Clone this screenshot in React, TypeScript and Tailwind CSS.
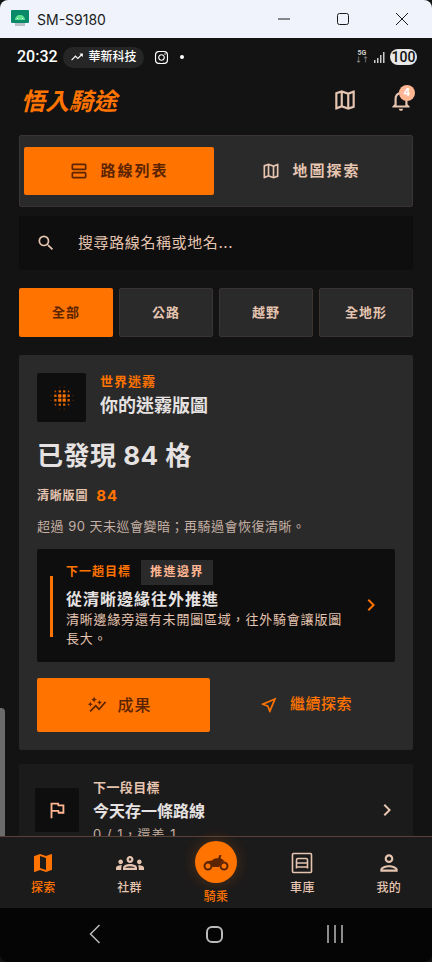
import {
  MdChevronRight,
  MdMap,
  MdOutlineAutoGraph,
  MdOutlineFlag,
  MdOutlineGroups,
  MdOutlineMap,
  MdOutlineNearMe,
  MdOutlineNotifications,
  MdOutlinePerson,
  MdOutlineSearch,
  MdOutlineTrendingUp,
  MdOutlineViewAgenda,
} from "react-icons/md";
import { FaInstagram } from "react-icons/fa";

const cjk = "font-['Inter','Noto_Sans_CJK_TC',sans-serif]";

const FogDots = () => {
  const pos = [-11, -6.6, -2.2, 2.2, 6.6, 11];
  return (
    <svg width="26" height="26" viewBox="-13 -13 26 26">
      {pos.map((x) =>
        pos.map((y) => {
          const d = Math.hypot(x, y);
          if (d > 12) return null;
          const s = d < 4 ? 3.2 : d < 8 ? 2.4 : d < 10 ? 1.6 : 1;
          const o = d < 4 ? 1 : d < 8 ? 0.85 : d < 10 ? 0.7 : 0.5;
          return <rect key={`${x}${y}`} x={x - s / 2} y={y - s / 2} width={s} height={s} rx="0.5" fill="#ff7300" opacity={o} />;
        }),
      )}
    </svg>
  );
};

const Garage = () => (
  <svg width="22" height="22" viewBox="0 0 22 22" fill="none" stroke="#e5c4b0" strokeWidth="1.6">
    <rect x="1.5" y="1.5" width="19" height="19" rx="1" />
    <path d="M5.500 16.500V8c0-1 .5-1.500 1.500-1.500h8c1 0 1.500.5 1.500 1.500v8.500" />
    <path d="M5.500 11h11M5.500 15h11" />
  </svg>
);

const Bike = () => (
  <svg width="26" height="17" viewBox="0 0 26 17" fill="none" stroke="#5c2400">
    <circle cx="5" cy="12" r="3.500" strokeWidth="2" />
    <circle cx="21" cy="12" r="3.500" strokeWidth="2" />
    <path d="M3 7.500l6-1c2-2 4-2.500 6-2l1.500-3.500h2L17.500 4l4 3-3.500 1.500-2 4.500H9.500L8 9.500z" fill="#5c2400" stroke="none" />
  </svg>
);

const NavItem = ({ icon, label, active }: { icon: React.ReactNode; label: string; active?: boolean }) => (
  <div className={`flex-1 flex flex-col items-center pt-[13px] ${active ? "text-[#ff7300]" : "text-[#e5c4b0]"}`}>
    <div className="h-[26px] flex items-center justify-center">{icon}</div>
    <span className="text-[12px] leading-[16px] mt-[4px] font-medium tracking-[0.3px]">{label}</span>
  </div>
);

const App = () => {
  return (
    <div className={`${cjk} w-[432px] h-[962px] flex flex-col bg-[#131313] overflow-hidden relative`}>
      {/* window chrome */}
      <div className="h-[38px] shrink-0 bg-[#f0f3fb] rounded-t-[8px] flex items-center pl-[11px] text-[#1b1b1b]">
        <svg width="18" height="18" viewBox="0 0 18 18">
          <rect x="0" y="0" width="18" height="13" rx="1" fill="#0b8a6a" />
          <rect x="4" y="13" width="10" height="3" fill="#b9bfc4" />
          <path d="M4 10c0-3 2-5 5-5s5 2 5 5z" fill="#5ee08f" />
          <path d="M6 8h1v1H6zM11 8h1v1h-1z" fill="#fff" />
        </svg>
        <span className="ml-[8px] text-[14px] font-['Inter',sans-serif]">SM-S9180</span>
        <div className="ml-auto flex items-center">
          <svg width="14" height="14" viewBox="0 0 14 14" className="mr-[45px]">
            <path d="M1 7h12" stroke="#1b1b1b" strokeWidth="1" />
          </svg>
          <svg width="14" height="14" viewBox="0 0 14 14" className="mr-[45px]">
            <rect x="1.500" y="1.500" width="11" height="11" rx="2" fill="none" stroke="#1b1b1b" strokeWidth="1" />
          </svg>
          <svg width="14" height="14" viewBox="0 0 14 14" className="mr-[23px]">
            <path d="M1 1l12 12M13 1L1 13" stroke="#1b1b1b" strokeWidth="1" />
          </svg>
        </div>
      </div>

      {/* status bar */}
      <div className="h-[38px] shrink-0 flex items-center pl-[17px] pr-[15px] text-white font-['Roboto','Noto_Sans_CJK_TC',sans-serif]">
        <span className="text-[16px] font-medium">20:32</span>
        <div className="ml-[5px] h-[21px] px-[7px] rounded-full bg-[#262626] flex items-center gap-[5px]">
          <MdOutlineTrendingUp size={14} />
          <span className="text-[12px] font-medium">華新科技</span>
        </div>
        <FaInstagram size={15} className="ml-[10px]" />
        <span className="ml-[11px] w-[4px] h-[4px] rounded-full bg-white" />
        <div className="ml-auto flex items-center gap-[5px]">
          <div className="flex flex-col items-center leading-[7px] text-[7px] font-bold text-[#ccc]">
            <span>5G</span>
            <span className="text-[#888]">↓↑</span>
          </div>
          <svg width="11" height="11" viewBox="0 0 11 11" fill="#ccc">
            <rect x="0" y="8" width="1.500" height="3" />
            <rect x="3" y="6" width="1.500" height="5" />
            <rect x="6" y="3" width="1.500" height="8" />
            <rect x="9" y="0" width="1.500" height="11" />
          </svg>
          <span className="w-[27px] h-[16px] rounded-full bg-[#e8e8e8] text-[#111] text-[14px] font-medium flex items-center justify-center">
            100
          </span>
        </div>
      </div>

      {/* header */}
      <div className="h-[59px] shrink-0 flex items-center pl-[21px] pr-[18px]">
        <h1 className="text-[24px] font-bold italic text-[#ff7300] leading-none -mt-[8px]">悟入騎途</h1>
        <div className="ml-auto flex items-center gap-[30px] text-[#e5c4b0] -mt-[12px]">
          <MdOutlineMap size={26} />
          <div className="relative">
            <MdOutlineNotifications size={26} />
            <span className="absolute -top-[2px] -right-[1px] w-[16px] h-[16px] rounded-full bg-[#ffb693] text-white text-[10px] font-bold flex items-center justify-center">
              4
            </span>
          </div>
        </div>
      </div>

      {/* scroll area */}
      <div className="flex-1 min-h-0 overflow-hidden px-[19px]">
        <div className="h-[72px] bg-[#2a2a2a] rounded-[2px] border border-[#3a3532] flex p-[4px] items-center">
          <div className="w-[190px] h-[48px] bg-[#ff7300] rounded-[2px] flex items-center justify-center gap-[11px] text-[#5c2400]">
            <MdOutlineViewAgenda size={20} />
            <span className="text-[15px] font-bold tracking-[2px]">路線列表</span>
          </div>
          <div className="flex-1 h-[48px] flex items-center justify-center gap-[11px] text-[#e5c4b0]">
            <MdOutlineMap size={20} />
            <span className="text-[15px] font-bold tracking-[2px]">地圖探索</span>
          </div>
        </div>

        <div className="h-[54px] mt-[9px] bg-[#0e0e0e] rounded-[2px] flex items-center pl-[17px] text-[#e5c4b0]">
          <MdOutlineSearch size={20} />
          <span className="ml-[22px] text-[15px] tracking-[0.6px]">搜尋路線名稱或地名...</span>
        </div>

        <div className="mt-[18px] grid grid-cols-4 gap-[6px]">
          <div className="h-[49px] rounded-[2px] bg-[#ff7300] text-[#5c2400] text-[13px] font-bold tracking-[1px] flex items-center justify-center">全部</div>
          {["公路", "越野", "全地形"].map((t) => (
            <div key={t} className="h-[49px] rounded-[2px] bg-[#2a2a2a] border border-[#3a3532] text-[#e5c4b0] text-[13px] font-bold tracking-[1px] flex items-center justify-center">
              {t}
            </div>
          ))}
        </div>

        {/* fog card */}
        <div className="mt-[18px] h-[395px] bg-[#2a2a2a] rounded-[2px] p-[18px]">
          <div className="flex gap-[14px]">
            <div className="w-[49px] h-[49px] rounded-[2px] bg-[#0e0e0e] flex items-center justify-center">
              <FogDots />
            </div>
            <div>
              <p className="text-[13px] leading-[16px] font-bold text-[#ff7300] tracking-[1px]">世界迷霧</p>
              <p className="text-[18px] leading-[24px] mt-[5px] font-bold text-[#e5e2e1]">你的迷霧版圖</p>
            </div>
          </div>
          <p className="mt-[15px] text-[26px] leading-[38px] font-bold text-[#e5e2e1] tracking-[0.5px]">已發現 84 格</p>
          <div className="mt-[10px] flex items-center gap-[8px]">
            <span className="text-[12px] font-bold text-[#e5c4b0] tracking-[0.8px]">清晰版圖</span>
            <span className="text-[15px] font-bold text-[#ff7300] tracking-[1px]">84</span>
          </div>
          <p className="mt-[8px] text-[13px] leading-[20px] text-[#c5b0a3] tracking-[0.5px]">超過 90 天未巡會變暗；再騎過會恢復清晰。</p>

          <div className="mt-[13px] h-[113px] bg-[#0e0e0e] rounded-[2px] flex items-center pl-[13px] pr-[16px]">
            <div className="w-[3px] h-[61px] bg-[#ff7300] self-start mt-[27px]" />
            <div className="ml-[13px] flex-1 self-start pt-[11px]">
              <div className="flex items-center gap-[10px]">
                <span className="text-[12px] font-bold text-[#ff7300] tracking-[1px]">下一趟目標</span>
                <span className="h-[25px] px-[9px] bg-[#2a2a2a] text-[12px] font-bold text-[#ffb693] tracking-[1.5px] flex items-center">推進邊界</span>
              </div>
              <p className="mt-[3px] text-[16px] leading-[22px] font-bold text-[#e5e2e1] tracking-[1px]">從清晰邊緣往外推進</p>
              <p className="text-[13px] leading-[19px] text-[#e5c4b0] tracking-[0.8px] w-[278px]">清晰邊緣旁還有未開圖區域，往外騎會讓版圖長大。</p>
            </div>
            <MdChevronRight size={24} className="text-[#ff7300] -mr-[4px]" />
          </div>

          <div className="mt-[16px] flex">
            <div className="w-[173px] h-[54px] bg-[#ff7300] rounded-[2px] flex items-center justify-center gap-[10px] pr-[8px] text-[#5c2400]">
              <MdOutlineAutoGraph size={20} />
              <span className="text-[16px] font-medium tracking-[1px]">成果</span>
            </div>
            <div className="flex-1 h-[54px] flex items-center justify-center gap-[11px] pl-[6px] text-[#ff7300]">
              <MdOutlineNearMe size={20} />
              <span className="text-[15px] font-medium tracking-[0.5px]">繼續探索</span>
            </div>
          </div>
        </div>

        {/* next goal card */}
        <div className="mt-[14px] bg-[#1c1b1b] rounded-[2px] h-[120px] pl-[16px] pr-[14px] pt-[15px] flex">
          <div className="w-[44px] h-[44px] mt-[9px] rounded-[2px] bg-[#0e0e0e] flex items-center justify-center text-[#ffb693]">
            <MdOutlineFlag size={22} />
          </div>
          <div className="ml-[14px] flex-1">
            <p className="text-[13px] leading-[16px] font-bold text-[#e5c4b0] tracking-[0.4px]">下一段目標</p>
            <p className="mt-[4px] text-[16px] leading-[24px] font-bold text-[#e5e2e1]">今天存一條路線</p>
            <p className="mt-[2px] text-[13px] leading-[18px] text-[#c5b0a3] tracking-[1px]">0 / 1，還差 1</p>
          </div>
          <MdChevronRight size={24} className="text-[#e5c4b0] mt-[19px]" />
        </div>
      </div>

      {/* bottom nav */}
      <div className="h-[72px] shrink-0 bg-[#1c1b1b] border-t border-[#5a4136] flex items-start">
        <NavItem icon={<MdMap size={24} />} label="探索" active />
        <NavItem icon={<MdOutlineGroups size={28} />} label="社群" />
        <div className="flex-1 flex flex-col items-center pt-[4px] text-[#ff7300]">
          <div className="w-[42px] h-[42px] rounded-full bg-[#ff7300] shadow-[0_0_14px_rgba(255,115,0,0.25)] flex items-center justify-center">
            <Bike />
          </div>
          <span className="mt-[6px] text-[12px] leading-[16px] font-medium tracking-[0.3px]">騎乘</span>
        </div>
        <NavItem icon={<Garage />} label="車庫" />
        <NavItem icon={<MdOutlinePerson size={26} />} label="我的" />
      </div>

      {/* android nav */}
      <div className="h-[54px] shrink-0 bg-[#050505] rounded-b-[8px] flex items-center justify-center text-[#bbb] pb-[2px]">
        <svg width="12" height="20" viewBox="0 0 12 20" fill="none" stroke="currentColor" strokeWidth="1.500">
          <path d="M10.500 1L1.500 10l9 9" />
        </svg>
        <span className="ml-[105px] w-[17px] h-[17px] rounded-[6px] border-2 border-[#bbb]" />
        <svg width="16" height="18" viewBox="0 0 16 18" stroke="currentColor" strokeWidth="1.500" className="ml-[104px]">
          <path d="M1 0v18M8 0v18M15 0v18" />
        </svg>
      </div>

      <div className="absolute left-0 top-[708px] w-[5px] h-[128px] bg-[#6b6b6b] rounded-tr-[4px]" />
    </div>
  );
};

export default App;
